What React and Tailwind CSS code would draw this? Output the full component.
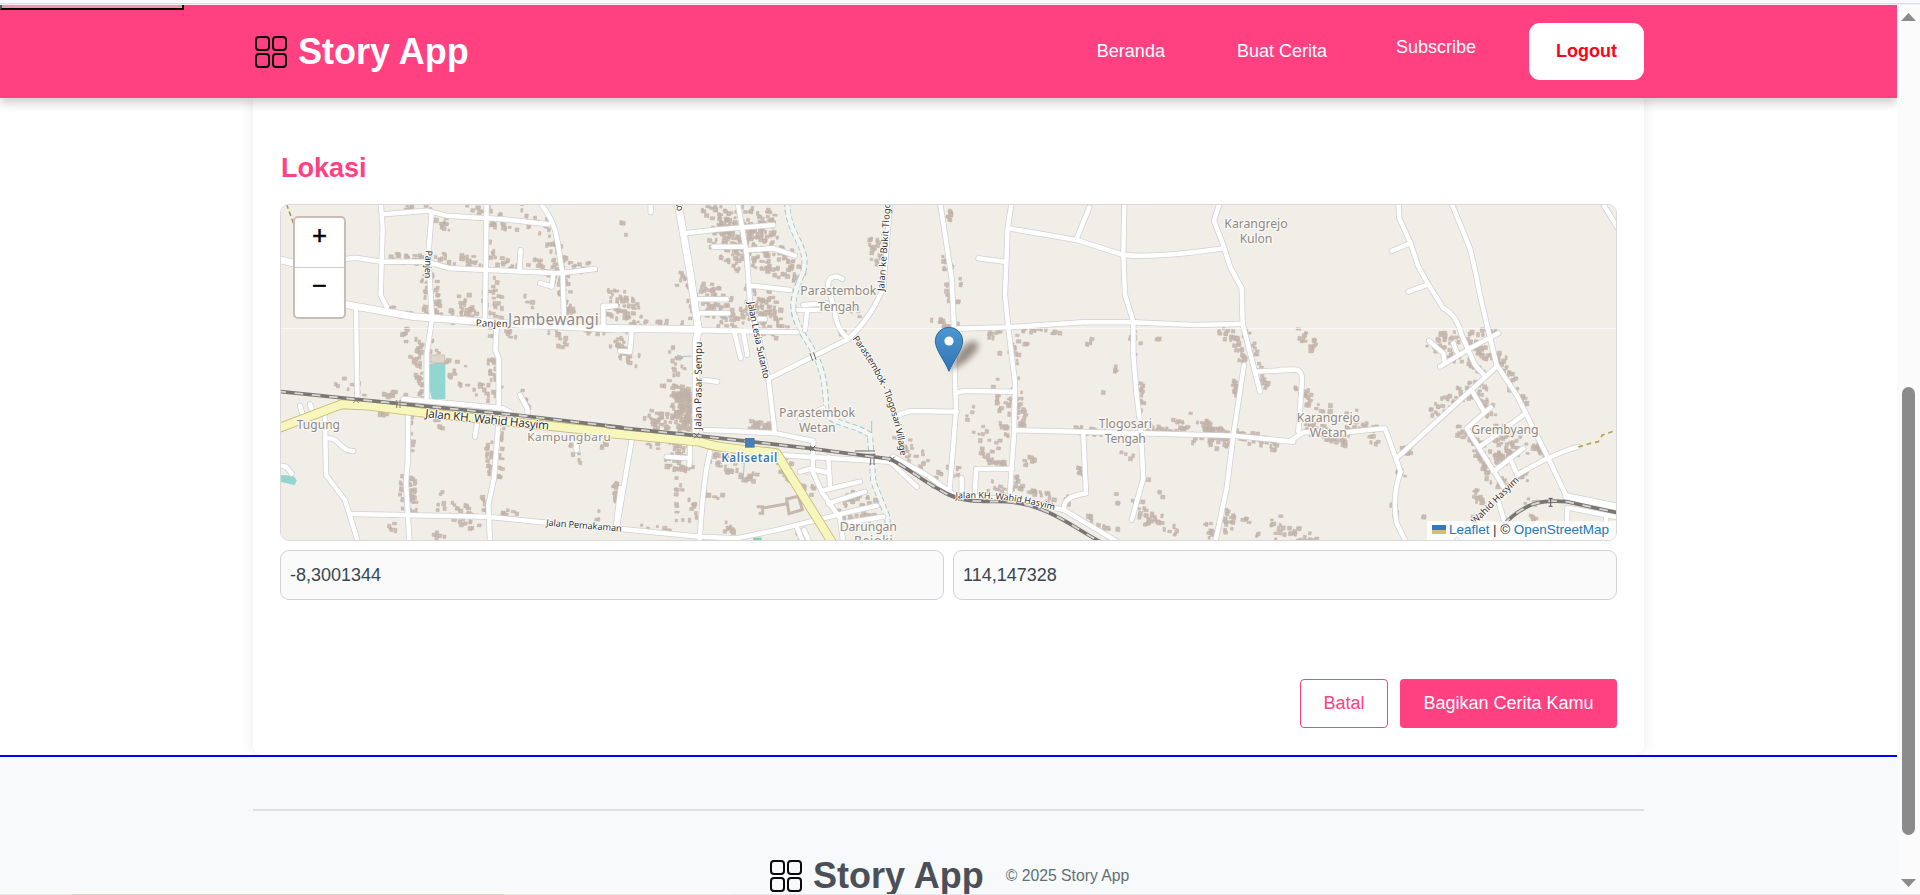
import React from "react";

/* Map geometry is split in four sheets, each at three units per pixel. */
const SHEETS = [
  {
    x: 270,
    major: ["M32 195L75 205", "M225 328L430 365L700 385L1050 402"],
    roads: [
      "M333 30L338 100L332 300L350 335", "M338 58L470 47L530 62L700 73L835 88", "M485 50L475 180L486 370L470 480L470 610",
      "M650 30L645 375", "M815 30C870 100 860 150 878 235L882 370", "M225 192L255 188L335 200L470 200L540 220L870 235L975 222",
      "M752 165L748 225", "M850 238L845 275L810 264", "M258 340L262 610", "M680 395L676 465L686 490L686 640",
      "M1000 390L1000 332L1038 332", "M400 612L700 640L722 652", "M415 655L413 800L408 860L418 1035",
      "M165 665L168 840L225 915L262 1035", "M168 730C210 725 210 770 250 768", "M90 632L98 660", "M120 628L128 652",
      "M750 600L772 640L773 660", "M622 680L615 725", "M685 690L672 850L655 930L660 1035", "M245 957L650 965L830 983L1055 1003",
      "M1052 880L1038 990", "M20 810L48 815L65 836", "M918 735L920 765",
    ],
    yellow: "M22 701L215 628L300 632L450 652L1060 716",
    rail: "M22 589L250 612L450 632L740 660L1060 698",
    blocks: [
      [390, 36, 490, 38, 8, 12], [505, 60, 530, 100, 14, 14], [600, 50, 720, 80, 26, 40], [740, 40, 830, 95, 24, 18],
      [350, 185, 470, 190, 16, 34], [490, 190, 620, 205, 22, 34], [660, 190, 860, 220, 24, 40], [845, 130, 890, 250, 22, 40],
      [900, 210, 970, 210, 18, 18], [660, 80, 660, 200, 22, 12], [580, 310, 600, 360, 18, 24], [660, 250, 670, 370, 30, 30],
      [760, 300, 780, 330, 12, 5], [870, 240, 895, 370, 20, 42], [490, 240, 500, 370, 12, 28], [460, 240, 465, 360, 8, 14],
      [360, 345, 640, 370, 20, 55], [410, 410, 450, 470, 26, 26], [440, 490, 458, 600, 12, 34], [485, 490, 525, 500, 12, 14],
      [640, 400, 740, 420, 22, 22], [840, 395, 880, 445, 16, 18], [900, 405, 1045, 412, 12, 14], [1040, 440, 1045, 500, 14, 12],
      [540, 510, 680, 600, 34, 34], [660, 490, 675, 560, 10, 20], [200, 550, 280, 590, 22, 16], [340, 590, 420, 605, 12, 14],
      [470, 420, 500, 480, 14, 10], [425, 650, 430, 760, 10, 14], [395, 830, 400, 940, 10, 12], [425, 850, 430, 950, 10, 30],
      [655, 740, 665, 830, 12, 26], [690, 700, 690, 880, 12, 24], [510, 910, 620, 980, 34, 42], [640, 900, 650, 950, 10, 14],
      [690, 950, 740, 965, 14, 12], [330, 650, 345, 665, 10, 7], [900, 740, 920, 790, 14, 10], [1000, 740, 1000, 760, 8, 6],
      [1035, 860, 1040, 900, 8, 10], [750, 590, 780, 650, 16, 9], [500, 670, 520, 700, 16, 7], [360, 970, 370, 1010, 12, 8], [980, 950, 985, 980, 8, 4],
      [490, 1010, 520, 1025, 10, 6], [760, 665, 860, 690, 10, 6],
    ],
  },
  {
    x: 610,
    major: ["M-10 400L265 403", "M205 30L240 230L265 403L258 440L258 705"],
    roads: [
      "M265 406L560 412", "M122 20L122 52", "M225 115L330 103L490 90", "M383 20L410 180L420 320L475 550L495 715", "M310 155L395 155",
      "M410 165L490 160L555 182", "M425 272L540 285", "M255 313L350 313", "M260 355L355 355", "M373 412L392 490", "M400 412L412 480",
      "M65 412L60 470L30 468", "M445 372L465 372", "M282 555L322 560", "M478 550L715 432C780 370 800 320 820 280L840 20",
      "M715 432C680 400 680 380 670 330L655 280C650 240 680 240 697 252", "M585 405L592 345", "M565 345L630 345", "M580 330L650 325",
      "M-10 335L15 333", "M285 705L370 708L500 715L610 738L608 830L635 890L690 970L700 1045", "M505 780L840 800L920 875",
      "M65 735L20 1000", "M10 1000L270 1025L380 1030L500 1005L700 955L800 932", "M300 770C280 850 275 950 268 1045",
      "M170 785L240 790L240 750", "M240 790L238 810", "M570 830L600 822L650 832", "M655 785L660 875", "M645 885L750 860",
      "M655 925L765 890", "M700 985L820 965", "M560 995L580 1045", "M582 1005L600 1045", "M865 660L900 648L1040 650",
      "M990 20L1025 250L1032 400L1035 560L1038 640L1030 750L1018 890", "M850 785L950 840L1030 898", "M570 670L640 640",
    ],
    yellow: "M-10 714L270 740C330 765 450 765 500 775L668 1045",
    rail: "M-10 694L260 722L600 760L840 792C900 820 960 880 1050 912",
    river: "M532 20C530 120 600 150 580 230C540 320 540 350 580 420C650 520 645 580 650 660C680 690 740 690 780 720L790 860L830 960L842 1045",
    blocks: [
      [300, 40, 370, 95, 46, 52], [340, 60, 380, 170, 30, 60], [410, 60, 480, 90, 40, 58], [400, 110, 490, 190, 44, 80],
      [320, 120, 390, 200, 34, 46], [510, 170, 560, 230, 26, 30], [410, 200, 540, 240, 20, 34], [210, 230, 240, 300, 22, 18],
      [270, 290, 400, 390, 44, 130], [430, 290, 500, 390, 42, 100], [250, 200, 250, 400, 14, 16], [20, 300, 70, 380, 34, 60],
      [0, 345, 40, 360, 20, 14], [80, 380, 240, 385, 10, 14], [5, 430, 70, 500, 22, 24], [190, 460, 210, 540, 20, 20],
      [205, 590, 225, 690, 28, 150], [160, 560, 240, 600, 14, 20], [235, 600, 240, 700, 10, 24], [110, 660, 190, 690, 24, 44],
      [430, 690, 490, 700, 18, 36], [120, 740, 240, 770, 18, 28], [180, 790, 230, 820, 20, 34], [290, 770, 440, 850, 24, 46],
      [500, 780, 545, 850, 20, 36], [560, 860, 600, 900, 20, 12],
      [790, 130, 800, 200, 16, 24], [730, 340, 740, 370, 12, 8], [690, 400, 700, 410, 10, 5], [975, 370, 1015, 390, 14, 12],
      [860, 740, 990, 850, 24, 44], [700, 900, 780, 930, 22, 32], [670, 950, 800, 975, 16, 20], [200, 860, 210, 990, 14, 14],
      [10, 860, 15, 920, 10, 10], [80, 995, 180, 1000, 10, 12], [270, 890, 350, 905, 10, 10], [240, 900, 250, 980, 12, 12],
      [340, 990, 370, 1005, 12, 12], [1010, 50, 1020, 80, 8, 5], [1000, 190, 1030, 320, 14, 12], [1020, 800, 1045, 850, 20, 8], [560, 1010, 570, 1030, 8, 5], [30, 60, 60, 160, 6, 3],
    ],
  },
  {
    x: 940,
    major: [],
    roads: [
      "M215 20L203 100L195 300L205 400L225 560L222 720L210 890", "M205 100L410 135L550 180Q650 190 850 160", "M448 38L410 130",
      "M115 190L195 200", "M553 20L550 180L555 300L580 380L580 480L590 600L602 700L610 850L575 975",
      "M38 401L200 397L430 382L580 382L760 390L900 387", "M840 20L822 78L850 150L870 215L905 280L908 387L960 590", "M945 530L1060 524",
      "M912 510L880 720L860 880L825 1045", "M228 706L600 715L880 722L1060 740", "M50 595Q60 588 80 588L220 590", "M105 895L108 822L215 822",
      "M65 850L65 890", "M430 720L438 895C380 905 370 920 372 945", "M28 898L250 918L372 945L440 985L540 1045",
    ],
    rail: "M0 885C60 925 120 918 200 920C330 930 400 1000 490 1045",
    blocks: [
      [20, 35, 35, 60, 8, 6], [5, 190, 30, 210, 10, 8], [20, 270, 25, 310, 6, 6], [60, 250, 65, 270, 7, 4], [0, 385, 60, 390, 8, 8],
      [150, 410, 200, 460, 22, 16], [240, 405, 370, 410, 10, 18], [225, 420, 235, 560, 8, 12], [255, 450, 265, 460, 8, 4],
      [440, 430, 450, 445, 10, 6], [575, 410, 595, 470, 14, 12], [645, 425, 655, 430, 5, 2], [840, 400, 870, 420, 14, 12],
      [885, 410, 905, 500, 14, 26], [920, 400, 955, 530, 14, 26], [960, 540, 980, 580, 14, 12], [885, 530, 890, 620, 10, 24],
      [520, 515, 555, 540, 12, 5], [600, 570, 605, 640, 10, 20], [175, 570, 200, 650, 24, 28], [230, 590, 245, 700, 16, 40],
      [95, 660, 190, 790, 34, 24], [120, 780, 205, 815, 14, 26], [180, 690, 210, 730, 12, 12], [255, 790, 275, 800, 16, 10],
      [400, 700, 490, 705, 14, 28], [600, 690, 720, 705, 12, 22], [790, 680, 830, 740, 24, 60], [840, 700, 870, 745, 14, 30],
      [890, 715, 1010, 750, 18, 48], [700, 680, 780, 740, 20, 24], [540, 760, 575, 800, 16, 5], [415, 800, 422, 840, 8, 10],
      [220, 850, 235, 890, 16, 20], [270, 895, 350, 915, 16, 22], [150, 870, 200, 895, 16, 14], [380, 895, 380, 925, 8, 8],
      [590, 920, 630, 980, 24, 26], [630, 960, 710, 1010, 22, 18], [860, 950, 870, 1010, 16, 26], [800, 990, 820, 1020, 14, 14],
      [900, 965, 920, 975, 10, 6], [1000, 960, 1020, 1020, 18, 14], [470, 980, 540, 1010, 14, 7], [520, 900, 530, 930, 8, 4], [950, 1010, 960, 1025, 8, 4],
      [440, 940, 460, 980, 12, 6], [490, 585, 490, 590, 3, 1], [750, 650, 755, 655, 3, 1], [660, 885, 660, 905, 6, 3], [620, 850, 625, 855, 4, 2],
    ],
  },
  {
    x: 1280,
    major: ["M860 905L1020 938"],
    roads: [
      "M355 20L358 70L392 145L415 215L445 268L490 340Q530 360 545 420L585 510L612 540", "M335 168L390 145", "M385 290L445 268",
      "M515 25L570 160Q585 220 600 300L628 420L650 510L710 600L805 790L860 905", "M965 20L1020 110",
      "M0 524L50 524Q68 530 66 560L60 640L55 710", "M0 738L30 738L70 712L200 712L315 700L362 830Q335 900 350 985L380 1045",
      "M355 785L650 515", "M480 515L570 460L655 415", "M447 438L490 475L495 505", "M520 445L530 470", "M575 585L612 650",
      "M632 637L560 700L680 890", "M600 755L730 660", "M640 830L730 760", "M690 790L712 840", "M712 840Q820 775 895 755",
      "M655 920L672 975", "M860 1045L862 938L1020 968", "M978 962L978 1040",
    ],
    rail: "M670 990C740 915 800 915 860 920L1020 955",
    blocks: [
      [65, 410, 90, 460, 16, 16], [100, 425, 112, 480, 8, 6], [45, 570, 50, 590, 6, 4], [80, 590, 90, 640, 12, 16],
      [110, 640, 220, 660, 20, 12], [80, 695, 200, 735, 18, 70], [200, 690, 300, 695, 14, 28], [250, 720, 300, 745, 12, 8],
      [480, 430, 560, 420, 18, 24], [450, 445, 540, 490, 18, 30], [560, 440, 610, 470, 16, 30], [600, 410, 640, 405, 14, 16],
      [560, 490, 600, 530, 14, 20], [610, 470, 670, 500, 18, 28], [670, 510, 700, 570, 16, 26], [530, 600, 610, 570, 24, 40],
      [450, 650, 520, 610, 20, 24], [600, 620, 640, 660, 18, 30], [540, 700, 600, 760, 16, 40], [590, 770, 640, 850, 16, 36],
      [650, 700, 720, 760, 28, 44], [630, 780, 700, 790, 28, 48], [710, 600, 740, 620, 12, 12], [760, 740, 790, 780, 12, 24],
      [640, 860, 680, 870, 18, 20], [370, 765, 400, 775, 12, 14], [350, 830, 375, 835, 12, 6], [330, 910, 355, 970, 10, 10],
      [720, 830, 740, 845, 14, 14], [590, 890, 600, 930, 12, 14], [20, 1010, 100, 1030, 18, 24], [430, 960, 435, 965, 4, 2],
      [730, 920, 770, 925, 12, 6], [750, 960, 770, 980, 10, 7], [560, 960, 590, 970, 12, 5],
    ],
  },
];

const PLACES = [
  [0, "Jambewangi", 850, 390, 46, 272], [0, "Tugung", 145, 702, 36, 130], [0, "Kampungbaru", 897, 738, 35, 250],
  [1, "Parastembok", 685, 300, 37, 228], [1, "Tengah", 686, 347, 37, 124], [1, "Parastembok", 621, 665, 37, 228], [1, "Wetan", 622, 712, 37, 110],
  [1, "Darungan", 775, 1007, 37, 172], [1, "Rejoki", 790, 1050, 37, 116],
  [2, "Karangrejo", 948, 99, 37, 190], [2, "Kulon", 948, 145, 37, 98], [2, "Tlogosari", 556, 698, 37, 160], [2, "Tengah", 556, 745, 37, 124],
  [3, "Karangrejo", 145, 680, 37, 190], [3, "Wetan", 145, 727, 37, 112], [3, "Grembyang", 675, 718, 37, 202],
];

const STREETS = [
  ["a1", 0, "Panjen", "M617 394L730 397", 29, 96], ["a2", 0, "Panjen", "M467 166L463 266", 28, 84],
  ["a3", 0, "Jalan KH. Wahid Hasyim", "M465 667L855 706", 35, 373], ["a4", 0, "Jalan Pemakaman", "M828 992L1070 1011", 28, 227],
  ["b1", 1, "Jalan Pasar Sempu", "M274 704L276 430", 30, 264], ["b2", 1, "Jalan Lesia Sutanto", "M413 322Q430 420 465 570", 29, 236],
  ["b3", 1, "Jalan ke Bukit Tlogosari", "M822 289L847 -50", 28, 316], ["b4", 1, "Parastembok - Tlogosari Village", "M727 431C800 530 850 620 874 800", 28, 385],
  ["b5", 1, "no", "M196 18L206 66", 28, 32], ["c1", 2, "Jalan KH. Wahid Hasyim", "M47 911Q200 902 358 950", 27, 299],
  ["d1", 3, "Jalan KH. Wahid Hasyim", "M497 1077L732 843", 28, 312],
];

function makeBlocks(list, start) {
  let s = start;
  const rnd = () => {
    s = (s * 1664525 + 1013904223) % 4294967296;
    return s / 4294967296;
  };
  let d = "";
  for (const [x1, y1, x2, y2, spread, n] of list) {
    for (let i = 0; i < n * 0.75; i++) {
      const t = rnd();
      const x = Math.round(x1 + (x2 - x1) * t + (rnd() - 0.5) * 1.9 * spread) - 3;
      const y = Math.round(y1 + (y2 - y1) * t + (rnd() - 0.5) * 1.9 * spread) - 3;
      const w = Math.round(6 + rnd() * 8);
      const h = Math.round(6 + rnd() * 8);
      d += `M${x} ${y}l${w} ${Math.round(rnd() * 2)}l-1 ${h}l${-w} -1z`;
    }
  }
  return d;
}

const BLOCKS = SHEETS.map((s, i) => makeBlocks(s.blocks, 97 + i * 31));
const at = (i) => `translate(${SHEETS[i].x} 195) scale(0.33333)`;

function MapCanvas() {
  return (
    <svg className="block h-full w-full" viewBox="281 205 1335 335" preserveAspectRatio="none" fill="none">
      <defs>
        {STREETS.map(([id, , , d]) => <path key={id} id={id} d={d} />)}
        <linearGradient id="pin" x1="0" y1="0" x2="0" y2="1">
          <stop offset="0" stopColor="#4f97cf" /><stop offset="1" stopColor="#2e74b5" />
        </linearGradient>
        <filter id="soft" x="-50%" y="-50%" width="200%" height="200%"><feGaussianBlur stdDeviation="3" /></filter>
      </defs>
      <rect x="281" y="205" width="1335" height="335" fill="#f1eee8" />
      {SHEETS.map((s, i) => (
        <g key={s.x} transform={at(i)}><path d={BLOCKS[i]} fill="#cbbeb4" stroke="#bfb0a5" strokeWidth="1.5" /></g>
      ))}
      <g transform={at(0)} fill="#93d5d0">
        <path d="M482 480h42v24h-42z" fill="#ded5cc" stroke="#c4b6ab" strokeWidth="2" />
        <path d="M478 506h48v106h-40l-8-30z" />
        <path d="M30 840l40 2 10 14-6 14-44-10z" />
      </g>
      <g transform={at(1)}>
        <path d={SHEETS[1].river} stroke="#94c9d6" strokeWidth="18" strokeDasharray="14 9" />
        <path d={SHEETS[1].river} stroke="#f6f5f0" strokeWidth="12.500" />
        <path d="M785 678v36M195 486l50-3M403 800l-4 60" stroke="#9ec9d4" strokeWidth="3" />
        <path d="M430 1032h25" stroke="#7fd0b4" strokeWidth="8" />
        <path d="M440 935h18v20h-12M455 940l75-14M530 912l35-8 12 40-40 12z" stroke="#c6b8ac" strokeWidth="9" />
        <path d="M555 842l14-8 26 4" stroke="#f0b5b0" strokeWidth="3" strokeDasharray="4 3" />
      </g>
      <g strokeLinecap="round" strokeLinejoin="round">
        {SHEETS.map((s, i) => (
          <g key={s.x} transform={at(i)} stroke="#d0d0d2">
            {s.roads.map((d) => <path key={d} d={d} strokeWidth="18" />)}
            {s.major.map((d) => <path key={d} d={d} strokeWidth="25" />)}
          </g>
        ))}
        {SHEETS.map((s, i) => (
          <g key={s.x} transform={at(i)} stroke="#ffffff">
            {s.roads.map((d) => <path key={d} d={d} strokeWidth="13.500" />)}
            {s.major.map((d) => <path key={d} d={d} strokeWidth="20.500" />)}
          </g>
        ))}
        {SHEETS.map((s, i) => s.yellow && <path key={s.x} transform={at(i)} d={s.yellow} stroke="#c9b970" strokeWidth="29" strokeLinecap="butt" />)}
        {SHEETS.map((s, i) => s.yellow && <path key={s.x} transform={at(i)} d={s.yellow} stroke="#f7f6bd" strokeWidth="24" strokeLinecap="butt" />)}
      </g>
      {SHEETS.map((s, i) => s.rail && (
        <g key={s.x} transform={at(i)}>
          <path d={s.rail} stroke="#7a7673" strokeWidth="11" />
          <path d={s.rail} stroke="#d9d7d3" strokeWidth="5.500" strokeDasharray="26 26" />
        </g>
      ))}
      <g transform={at(1)} stroke="#6b6765" strokeWidth="3">
        <path d="M735 768h60M740 778h56M252 714l16 16M268 714l-16 16M600 752l16 16M616 752l-16 16M838 785l16 16M854 785l-16 16M600 475l8 22M610 472l8 22M782 790v20M792 790v20" />
        <rect x="405" y="729" width="29" height="29" fill="#4a7fb5" stroke="none" />
      </g>
      <g transform={at(0)} stroke="#8a8072" strokeWidth="3">
        <path d="M250 608l16 16M266 608l-16 16M380 615v24M390 615v24M725 655l14 14M739 655l-14 14" />
        <path d="M50 28L75 98" stroke="#a5954e" strokeWidth="4.500" strokeDasharray="14 9" />
      </g>
      <g transform={at(3)}>
        <path d="M895 756l40-12 20-4 12-20 45-15" stroke="#b3a24e" strokeWidth="5" strokeDasharray="14 12" />
        <path d="M806 910h12M806 934h12M812 910v24" stroke="#555" strokeWidth="3" />
      </g>
      <path d="M281 328.5H1616" stroke="#ffffff" strokeOpacity="0.65" />
      <g fontFamily="'Noto Sans', sans-serif" style={{ paintOrder: "stroke" }} strokeLinejoin="round">
        {PLACES.map(([i, t, x, y, size, w]) => (
          <text key={t + x} transform={at(i)} x={x} y={y} fontSize={size} textLength={w} textAnchor="middle" fill="#8f8985" stroke="#f8f6f2" strokeWidth="8">{t}</text>
        ))}
        {STREETS.map(([id, i, t, , size, w]) => (
          <text key={id} transform={at(i)} fontSize={size} fill="#333130" stroke="#ffffff" strokeWidth="5">
            <textPath href={`#${id}`} textLength={w}>{t}</textPath>
          </text>
        ))}
        <text transform={at(1)} x="418" y="801" fontSize="35" fontWeight="600" textLength="168" textAnchor="middle" fill="#3f78b0" stroke="#ffffff" strokeWidth="7">Kalisetail</text>
      </g>
      <path d="M949 371c4-10 9-18 15-25 9-9 19-4 12 5-6 9-17 16-27 20z" fill="#5b4c42" opacity="0.6" filter="url(#soft)" />
      <path d="M949 371.300C945 361 935.300 350 935.300 341A13.700 13.700 0 0 1 962.700 341C962.700 350 953 361 949 371.300z" fill="url(#pin)" stroke="#2b6ca8" strokeWidth="1" />
      <circle cx="949" cy="341" r="4.600" fill="#fff" />
    </svg>
  );
}

function Brand({ textClass }) {
  return (
    <div className="flex items-center">
      <svg className="h-8 w-8" viewBox="0 0 32 32" fill="none" stroke="#0a0a0a" strokeWidth="2">
        <rect x="1" y="1" width="13" height="13" rx="3" />
        <rect x="18" y="1" width="13" height="13" rx="3" />
        <rect x="1" y="18" width="13" height="13" rx="3" />
        <rect x="18" y="18" width="13" height="13" rx="3" />
      </svg>
      <span className={`ml-[11px] text-[36px] leading-10 font-bold whitespace-nowrap ${textClass}`}>Story App</span>
    </div>
  );
}

function Header() {
  return (
    <header className="relative z-10 flex h-[93px] shrink-0 items-center bg-[#ff4081] pr-[253px] pl-[255px] text-lg text-white shadow-[0_5px_9px_rgba(0,0,0,0.2)]">
      <div className="absolute top-0 left-0 h-[5px] w-[184px] border-2 border-t-0 border-black border-l-[#555] bg-[#ff8fab]" />
      <Brand textClass="text-white" />
      <nav className="ml-auto flex items-center whitespace-nowrap">
        <span className="mr-[72px] pb-0.5">Beranda</span>
        <span className="mr-[69px] pb-0.5">Buat Cerita</span>
        <span className="mr-[53px] pb-2.5">Subscribe</span>
        <button className="h-[57px] w-[115px] rounded-[11px] bg-white pb-0.5 font-bold text-[#ff0018]">Logout</button>
      </nav>
    </header>
  );
}

function LocationCard() {
  return (
    <section className="mx-[253px] flex h-[657px] flex-col rounded-b-[9px] bg-white px-[27px] pt-[51px] shadow-[0_0_14px_rgba(0,0,0,0.09)]">
      <h2 className="h-[55px] pl-px text-[27px] leading-[38px] font-bold text-[#ff4081]">Lokasi</h2>
      <div className="relative h-[337px] shrink-0 overflow-hidden rounded-[9px] border border-[#d9d9db]">
        <MapCanvas />
        <div className="absolute top-[11px] left-[12px] w-[53px] overflow-hidden rounded-[5px] border-2 border-[#c9bdb6] bg-white text-center text-[25px] leading-[28px] text-black [-webkit-text-stroke:0.6px_#000]">
          <div className="h-[50px] border-b border-[#ccc] pt-[3px]">+</div>
          <div className="h-[49px] pt-[3px]">−</div>
        </div>
        <div className="absolute right-0 bottom-0 flex h-[19px] w-[189px] items-center bg-white/80 pb-0.5 pl-[5px] text-[13.5px] leading-[17px] whitespace-nowrap text-[#333]">
          <svg className="mr-[3px] h-[9px] w-[14px]" viewBox="0 0 14 9"><path fill="#3079bd" d="M0 0h14v5H0z" /><path fill="#cfc076" d="M0 5h14v4H0z" /></svg>
          <span className="text-[#1f78b8]">Leaflet</span>
          <span className="mx-[3.5px]">| ©</span>
          <span className="text-[#1f78b8]">OpenStreetMap</span>
        </div>
      </div>
      <div className="mt-[9px] grid grid-cols-2 gap-[9px] text-lg text-[#37474f]">
        <div className="flex h-[50px] items-center rounded-[9px] border border-[#cfd3d8] bg-[#fafafa] px-[9px]">-8,3001344</div>
        <div className="flex h-[50px] items-center rounded-[9px] border border-[#cfd3d8] bg-[#fafafa] px-[9px]">114,147328</div>
      </div>
      <div className="mt-[79px] flex justify-end gap-3 text-lg">
        <button className="h-[49px] w-[88px] rounded-[4px] border border-[#ff4081] bg-white pb-0.5 text-[#ff4081]">Batal</button>
        <button className="h-[49px] w-[217px] rounded-[4px] bg-[#ff4081] pb-0.5 text-white">Bagikan Cerita Kamu</button>
      </div>
    </section>
  );
}

export default function App() {
  return (
    <div className="flex h-[895px] w-[1920px] flex-col overflow-hidden bg-white font-['Liberation_Sans',Arial,sans-serif]">
      <div className="h-[5px] shrink-0 border-b border-[#f2f2f6] bg-[#f8f8ff]"><div className="h-1 border-b border-[#dcdce6]" /></div>
      <div className="flex min-h-0 flex-1">
        <main className="flex w-[1897px] flex-col overflow-hidden">
          <Header />
          <LocationCard />
          <footer className="relative flex-1 overflow-hidden border-t-2 border-[#0000ff] bg-[#f8f9fb] px-[253px] pt-[52px]">
            <div className="h-[2px] bg-[#dfe0e4]" />
            <div className="mt-[45px] flex items-center pl-[517px]">
              <Brand textClass="text-[#4b4f58]" />
              <span className="ml-[22px] text-[15.75px] leading-6 whitespace-nowrap text-[#607070]">© 2025 Story App</span>
            </div>
          </footer>
        </main>
        <aside className="flex w-[23px] flex-col items-center bg-[#fbfbfb] pt-2">
          <svg className="h-2 w-[15px]" viewBox="0 0 15 8"><path d="M7.500 0L15 8H0z" fill="#8b8b8b" /></svg>
          <div className="mt-[366px] h-[448px] w-[13px] rounded-full bg-[#8b8b8b]" />
          <svg className="mt-[44px] h-2 w-[15px]" viewBox="0 0 15 8"><path d="M0 0h15L7.500 8z" fill="#8b8b8b" /></svg>
        </aside>
      </div>
      <div className="flex h-px shrink-0 bg-[#e6e8ea]">
        <div className="w-[72px] bg-[#eceae4]" />
        <div className="w-[432px] bg-[#d6cfc5]" />
        <div className="w-[227px] bg-[#eeebe5]" />
      </div>
    </div>
  );
}
